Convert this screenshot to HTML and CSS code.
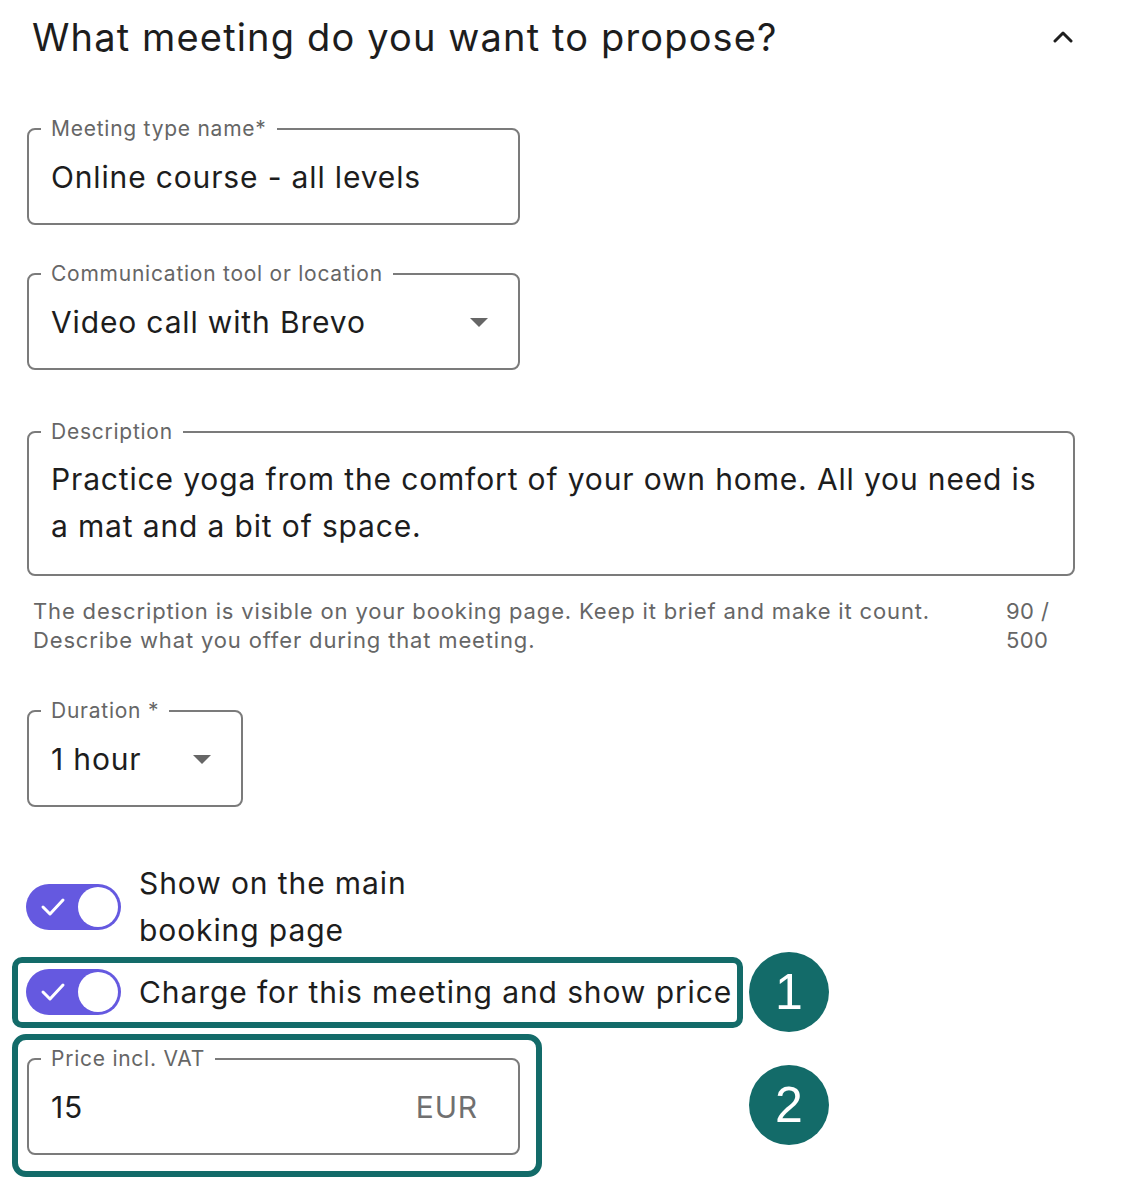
FILE: index.html
```html
<!DOCTYPE html>
<html lang="en">
<head>
  <meta charset="UTF-8" />
  <meta name="viewport" content="width=device-width, initial-scale=1.0"/>
  <title>Meeting type</title>
  <link rel="stylesheet" href="styles.css">
</head>
<body>
  <div class="page">
    <div class="header">
      <h1>What meeting do you want to propose?</h1>
      <svg class="chevron" viewBox="0 0 20 14" aria-hidden="true">
        <polyline points="2,11 10,3 18,11" fill="none" stroke="#1f1f1f" stroke-width="3" stroke-linecap="round" stroke-linejoin="round"/>
      </svg>
    </div>

    <fieldset class="field field-name">
      <legend>Meeting type name*</legend>
      <div class="value">Online course - all levels</div>
    </fieldset>

    <fieldset class="field field-tool">
      <legend>Communication tool or location</legend>
      <div class="value select">
        <span>Video call with Brevo</span>
        <span class="caret"></span>
      </div>
    </fieldset>

    <fieldset class="field field-desc">
      <legend>Description</legend>
      <div class="value multi">Practice yoga from the comfort of your own home. All you need is a mat and a bit of space.</div>
    </fieldset>

    <div class="helper">
      <span>The description is visible on your booking page. Keep it brief and make it count.<br>Describe what you offer during that meeting.</span>
      <span class="counter">90 /<br>500</span>
    </div>

    <fieldset class="field field-duration">
      <legend>Duration *</legend>
      <div class="value select">
        <span>1 hour</span>
        <span class="caret"></span>
      </div>
    </fieldset>

    <div class="toggle-row main-page">
      <span class="switch">
        <svg class="check" viewBox="0 0 26 20" aria-hidden="true">
          <polyline points="3,10 10,17 23,3" fill="none" stroke="#fff" stroke-width="3" stroke-linecap="round" stroke-linejoin="round"/>
        </svg>
        <span class="knob"></span>
      </span>
      <span class="toggle-label narrow">Show on the main booking page</span>
    </div>

    <div class="callouts">
      <div class="callout-box charge">
        <div class="toggle-row">
          <span class="switch">
            <svg class="check" viewBox="0 0 26 20" aria-hidden="true">
              <polyline points="3,10 10,17 23,3" fill="none" stroke="#fff" stroke-width="3" stroke-linecap="round" stroke-linejoin="round"/>
            </svg>
            <span class="knob"></span>
          </span>
          <span class="toggle-label">Charge for this meeting and show price</span>
        </div>
      </div>
      <div class="badge">1</div>

      <div class="callout-box price">
        <fieldset class="field field-price">
          <legend>Price incl. VAT</legend>
          <div class="value select">
            <span>15</span>
            <span class="unit">EUR</span>
          </div>
        </fieldset>
      </div>
      <div class="badge">2</div>
    </div>
  </div>
</body>
</html>
```

FILE: styles.css
```css
body {
  margin: 0;
  font-family: Inter, 'Noto Sans', sans-serif;
  color: #1d1d1d;
  background: #fff;
}

.page {
  padding: 13px 55px 0 27px;
}

.header {
  display: flex;
  align-items: center;
  justify-content: space-between;
  height: 48px;
  padding-left: 5px;
}

.header h1 {
  margin: 0;
  font-size: 38px;
  font-weight: 400;
  line-height: 48px;
  letter-spacing: 1.15px;
}

.chevron {
  width: 20px;
  height: 14px;
}

.field {
  margin: 0;
  min-width: 0;
  padding: 0 22px;
  border: 2px solid #7b7b7b;
  border-radius: 8px;
  box-sizing: border-box;
}

.field legend {
  margin-left: -10px;
  padding: 0 10px;
  font-size: 21px;
  line-height: 24px;
  letter-spacing: 0.75px;
  color: #666;
}

.value {
  font-size: 30px;
  line-height: 36px;
  letter-spacing: 0.85px;
  padding: 18px 0 28px;
}

.value.multi {
  line-height: 47px;
  padding: 12px 0 24px;
}

.select {
  display: flex;
  align-items: center;
  justify-content: space-between;
}

.caret {
  width: 0;
  height: 0;
  margin-right: 8px;
  border-left: 9px solid transparent;
  border-right: 9px solid transparent;
  border-top: 9px solid #666;
}

.unit {
  color: #707070;
  margin-right: 18px;
}

.field-name {
  width: 493px;
  margin-top: 56px;
}

.field-tool {
  width: 493px;
  margin-top: 37px;
}

.field-desc {
  width: 1048px;
  margin-top: 50px;
}

.helper {
  display: flex;
  justify-content: space-between;
  width: 1017px;
  margin: 21px 0 0 6px;
  font-size: 22px;
  line-height: 29px;
  letter-spacing: 0.85px;
  color: #666;
}

.counter {
  width: 44px;
  letter-spacing: 0.4px;
}

.field-duration {
  width: 216px;
  margin-top: 44px;
}

.toggle-row {
  display: flex;
  align-items: center;
  gap: 18px;
}

.main-page {
  margin: 53px 0 0 -1px;
}

.switch {
  display: flex;
  align-items: center;
  justify-content: space-between;
  flex-shrink: 0;
  width: 95px;
  height: 46px;
  padding: 0 3px 0 14px;
  border-radius: 23px;
  background: #6559e0;
  box-sizing: border-box;
}

.check {
  width: 26px;
  height: 20px;
}

.knob {
  width: 40px;
  height: 40px;
  border-radius: 50%;
  background: #fff;
}

.toggle-label {
  font-size: 30px;
  line-height: 47px;
  letter-spacing: 0.9px;
  white-space: nowrap;
}

.toggle-label.narrow {
  max-width: 320px;
  white-space: normal;
}

.callouts {
  display: grid;
  grid-template-columns: 731px 80px;
  column-gap: 6px;
  row-gap: 1.5px;
  align-items: center;
  margin: -2px 0 0 -15px;
}

.callout-box {
  border: 6px solid #136b69;
  border-radius: 10px;
  box-sizing: border-box;
}

.charge {
  padding: 6px 4px 6px 8px;
}

.price {
  justify-self: start;
  width: 530px;
  padding: 7px 16px 16px 9px;
  border-radius: 14px;
}

.field-price {
  width: 493px;
}

.badge {
  display: flex;
  align-items: center;
  justify-content: center;
  width: 80px;
  height: 80px;
  border-radius: 50%;
  background: #136b69;
  color: #fff;
  font-family: 'Liberation Sans', Arial, sans-serif;
  font-size: 50px;
}
```
